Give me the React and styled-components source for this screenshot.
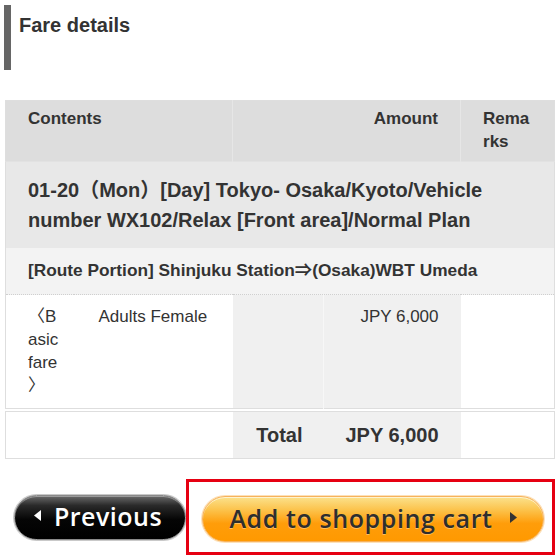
import React from 'react';
import styled, { createGlobalStyle } from 'styled-components';

const GlobalStyle = createGlobalStyle`
  body {
    margin: 0;
    background: #fff;
    font-family: "Liberation Sans", Arial, "Noto Sans CJK JP", sans-serif;
    color: #333;
  }
`;

const Page = styled.div`
  width: 559px;
  padding-top: 5px;
`;

const Heading = styled.div`
  margin-left: 4px;
  height: 57px;
  padding: 8px 0 0 8px;
  border-left: 7px solid #666;
  h2 {
    margin: 0;
    font-size: 20px;
    line-height: 24px;
    font-weight: bold;
    color: #333;
  }
`;

const FareTable = styled.table`
  width: 549px;
  margin: ${(p) => (p.$gap ? '2px' : '30px')} 5px 0;
  border-collapse: collapse;
  table-layout: fixed;
  border: 1px solid #dedede;
  font-size: 17px;
  line-height: 23px;
  color: #333;
  td, th {
    padding: 0;
    vertical-align: top;
  }
`;

const HeadCell = styled.th`
  background: #dddddd;
  padding: 6px 22px 8px !important;
  font-weight: bold;
  text-align: ${(p) => p.$align || 'left'};
  border-right: 1px solid #e6e6e6;
  word-break: break-all;
  &:last-child {
    border-right: none;
  }
`;

const TitleCell = styled.td`
  background: #e8e8e8;
  padding: 13px 22px 13px !important;
  font-size: 20px;
  line-height: 30px;
  font-weight: bold;
  border-top: 1px solid #e2e2e2;
`;

const RouteCell = styled.td`
  background: #f3f3f3;
  padding: 11px 22px 12px !important;
  font-weight: bold;
  font-size: 17.3px;
  border-bottom: 1px dotted #cfcfcf;
`;

const Cell = styled.td`
  background: ${(p) => (p.$shade ? '#f0f0f0' : '#fff')};
  padding: ${(p) => p.$pad || '10px 22px 11px'} !important;
  text-align: ${(p) => p.$align || 'left'};
  font-weight: ${(p) => (p.$bold ? 'bold' : 'normal')};
  font-size: ${(p) => (p.$bold ? '20px' : '17px')};
  line-height: ${(p) => (p.$bold ? '24px' : '23px')};
  border-left: ${(p) => (p.$divider ? '1px solid #f7f7f7' : 'none')};
  word-break: break-all;
  line-break: anywhere;
  white-space: ${(p) => (p.$bold ? 'nowrap' : 'normal')};
`;

const Actions = styled.div`
  display: flex;
  align-items: center;
  margin-top: 20px;
  padding-left: 14px;
`;

const PillButton = styled.button`
  display: flex;
  align-items: center;
  justify-content: center;
  gap: 12px;
  height: 45px;
  border-radius: 23px;
  font-family: "Open Sans", "Noto Sans", sans-serif;
  font-size: 25px;
  font-weight: 600;
  letter-spacing: 0.5px;
  cursor: pointer;
  padding: 0 0 3px;
`;

const BackButton = styled(PillButton)`
  width: 172px;
  color: #fff;
  border: 1px solid #8a8a8a;
  background: linear-gradient(#6a6a6a 0%, #2a2a2a 22%, #050505 55%, #000 100%);
  box-shadow: 0 0 0 1px #c9c9c9, inset 0 1px 0 rgba(255, 255, 255, 0.35);
  padding-right: 4px;
`;

const CartFrame = styled.div`
  border: 3px solid #e60012;
  padding: 14px 8px 10px 13px;
`;

const CartButton = styled(PillButton)`
  width: 342px;
  height: 46px;
  color: #2e2e2e;
  border: 1px solid #f7b25c;
  background: linear-gradient(#fbe28c 0%, #fcc24a 30%, #ff9d0a 60%, #ff9900 100%);
  box-shadow: inset 0 1px 0 rgba(255, 255, 255, 0.6), 0 0 0 1px #fde1b8;
  text-shadow: 0 1px 0 rgba(255, 255, 255, 0.35);
  gap: 16px;
  letter-spacing: 0.6px;
`;

const Arrow = ({ dir, color }) => (
  <svg width="8" height="11" viewBox="0 0 8 11">
    {dir === 'left' ? (
      <polygon points="7,0 7,11 0,5.5" fill={color} />
    ) : (
      <polygon points="1,0 1,11 8,5.5" fill={color} />
    )}
  </svg>
);

const Columns = () => (
  <colgroup>
    <col style={{ width: 68 }} />
    <col style={{ width: 159 }} />
    <col style={{ width: 91 }} />
    <col style={{ width: 137 }} />
    <col style={{ width: 94 }} />
  </colgroup>
);

export default function App() {
  return (
    <Page>
      <GlobalStyle />
      <Heading>
        <h2>Fare details</h2>
      </Heading>

      <FareTable>
        <Columns />
        <thead>
          <tr>
            <HeadCell colSpan={2}>Contents</HeadCell>
            <HeadCell colSpan={2} $align="right">Amount</HeadCell>
            <HeadCell>Remarks</HeadCell>
          </tr>
        </thead>
        <tbody>
          <tr>
            <TitleCell colSpan={5}>
              01-20（Mon）[Day] Tokyo- Osaka/Kyoto/Vehicle number WX102/Relax [Front area]/Normal Plan
            </TitleCell>
          </tr>
          <tr>
            <RouteCell colSpan={5}>
              [Route Portion] Shinjuku Station⇒(Osaka)WBT Umeda
            </RouteCell>
          </tr>
          <tr>
            <Cell $pad="10px 8px 11px 22px">〈Basic fare〉</Cell>
            <Cell $pad="10px 10px 11px 25px">Adults Female</Cell>
            <Cell $shade />
            <Cell $shade $divider $align="right">JPY 6,000</Cell>
            <Cell />
          </tr>
        </tbody>
      </FareTable>

      <FareTable $gap>
        <Columns />
        <tbody>
          <tr>
            <Cell colSpan={2} $pad="11px 22px" />
            <Cell $shade $bold $align="right" $pad="11px 21px 11px 10px">Total</Cell>
            <Cell $shade $bold $align="right" $pad="11px 22px 11px 10px">JPY 6,000</Cell>
            <Cell $pad="11px 22px" />
          </tr>
        </tbody>
      </FareTable>

      <Actions>
        <BackButton type="button">
          <Arrow dir="left" color="#fff" />
          Previous
        </BackButton>
        <CartFrame>
          <CartButton type="button">
            Add to shopping cart
            <Arrow dir="right" color="#333" />
          </CartButton>
        </CartFrame>
      </Actions>
    </Page>
  );
}
